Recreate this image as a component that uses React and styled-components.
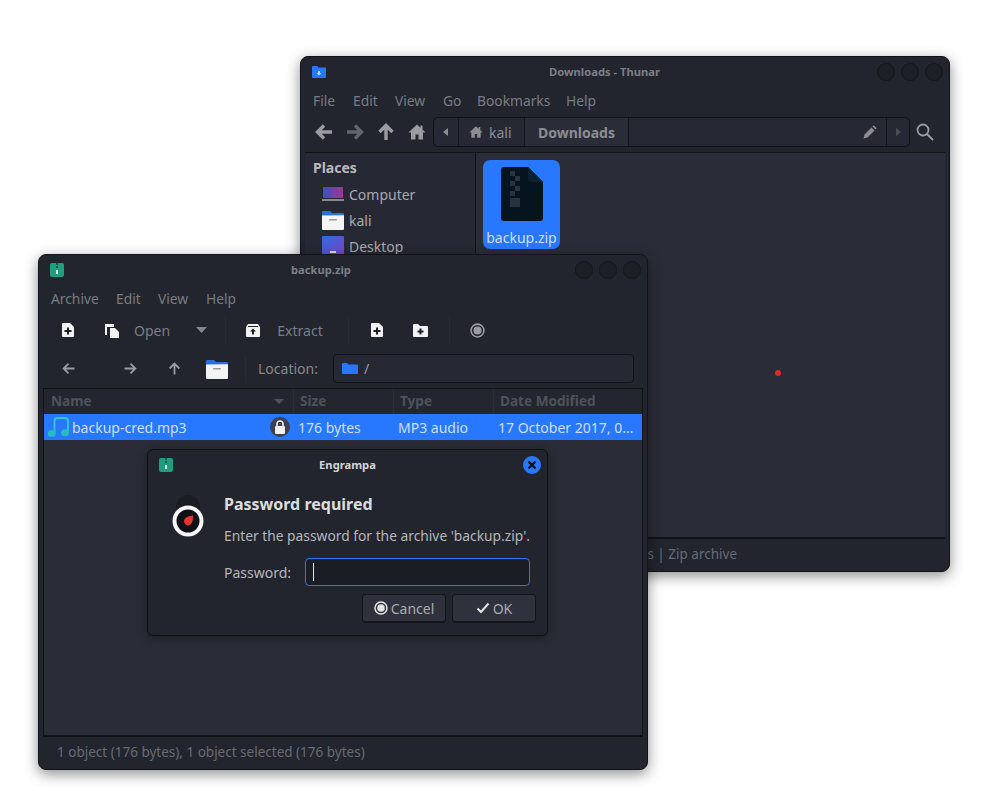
import React from "react";
import styled, { createGlobalStyle } from "styled-components";

const GlobalStyle = createGlobalStyle`
  html, body { margin: 0; padding: 0; background: #fff; }
  body { font-family: "Noto Sans", "Open Sans", sans-serif; font-size: 14px; }
  * { box-sizing: border-box; }
`;

const Desktop = styled.div`
  position: relative;
  width: 1004px;
  height: 791px;
  overflow: hidden;
  background: #fff;
`;

const Window = styled.div`
  position: absolute;
  left: ${(p) => p.$x}px;
  top: ${(p) => p.$y}px;
  width: ${(p) => p.$w}px;
  height: ${(p) => p.$h}px;
  display: flex;
  flex-direction: column;
  background: #22252e;
  border: 1px solid #121318;
  border-radius: 8px;
  box-shadow: 0 4px 14px rgba(0, 0, 0, 0.45);
  overflow: hidden;
`;

const TitleBar = styled.div`
  flex: none;
  height: ${(p) => p.$h}px;
  display: flex;
  align-items: center;
  position: relative;
  padding: 0 6px 0 11px;
`;

const TitleText = styled.div`
  position: absolute;
  left: 0;
  right: ${(p) => p.$right || 0}px;
  padding-bottom: 2px;
  text-align: center;
  font-size: 11.2px;
  font-weight: 700;
  color: ${(p) => p.$color || "#7d7f86"};
`;

const TitleButtons = styled.div`
  margin-left: auto;
  display: flex;
  gap: 6px;
`;

const Dot = styled.span`
  width: 18px;
  height: 18px;
  border-radius: 50%;
  background: #1d1f26;
  border: 1px solid #15161b;
`;

const MenuBar = styled.div`
  flex: none;
  height: ${(p) => p.$h}px;
  display: flex;
  align-items: center;
  gap: 16px;
  padding-left: 12px;
  font-size: 13.8px;
  color: #797c83;
`;

const MenuItem = styled.span`
  flex: none;
  width: ${(p) => p.$w}px;
  white-space: nowrap;
`;

/* thunar */
const NavBar = styled.div`
  flex: none;
  height: 39px;
  display: flex;
  align-items: center;
  padding: 0 15px 1px 8px;
`;

const NavIcon = styled.span`
  display: flex;
  align-items: center;
  justify-content: center;
  width: ${(p) => p.$w || 32}px;
  color: ${(p) => p.$color || "#9a9ca1"};
`;

const PathBar = styled.div`
  margin-left: 1px;
  margin-right: 6px;
  flex: 1;
  height: 30px;
  display: flex;
  background: #262933;
  border: 1px solid #121318;
  border-radius: 5px;
`;

const PathCell = styled.div`
  width: ${(p) => p.$w}px;
  flex: ${(p) => (p.$grow ? 1 : "none")};
  display: flex;
  align-items: center;
  justify-content: ${(p) => p.$justify || "flex-start"};
  gap: 6px;
  padding: 0 ${(p) => p.$pad || 0}px;
  border-left: ${(p) => (p.$divider ? "1px solid #15161b" : "none")};
  color: #8b8d93;
  font-size: 14px;
  font-weight: ${(p) => (p.$bold ? 700 : 400)};
  background: ${(p) => (p.$bold ? "#2a2d37" : "transparent")};
`;

const ThunarBody = styled.div`
  flex: 1;
  min-height: 0;
  margin: 0 4px;
  display: flex;
  border-top: 1px solid #111216;
  border-bottom: 2px solid #111216;
`;

const SidePane = styled.div`
  flex: none;
  width: 171px;
  background: #262933;
  border-right: 1px solid #111216;
  padding: 3px 0 0 8px;
  overflow: hidden;
`;

const SideTitle = styled.div`
  height: 25px;
  line-height: 24px;
  font-size: 14px;
  font-weight: 700;
  color: #b9babd;
`;

const SideRow = styled.div`
  display: flex;
  align-items: center;
  gap: 5px;
  height: 26px;
  padding-left: 9px;
  color: #a7a9ae;
  font-size: 14px;
`;

const FilePane = styled.div`
  flex: 1;
  background: #2a2c37;
  padding: 7px;
`;

const FileTile = styled.div`
  width: 77px;
  height: 89px;
  border-radius: 7px;
  background: #2777ff;
  display: flex;
  flex-direction: column;
  align-items: center;
  padding-top: 7px;
  color: #cfdffb;
  font-size: 14px;
`;

const FileLabel = styled.div`
  margin-top: 7px;
  line-height: 20px;
`;

const StatusBar = styled.div`
  flex: none;
  height: 32px;
  display: flex;
  align-items: center;
  justify-content: ${(p) => p.$justify || "flex-start"};
  padding: 0 ${(p) => p.$right || 0}px 3px ${(p) => p.$left || 0}px;
  font-size: 13.5px;
  color: #686b73;
`;

/* engrampa */
const ToolRow = styled.div`
  flex: none;
  height: ${(p) => p.$h}px;
  display: flex;
  align-items: center;
`;

const ToolItem = styled.span`
  flex: none;
  display: flex;
  align-items: center;
  justify-content: center;
  width: ${(p) => p.$w}px;
  margin-left: ${(p) => p.$ml || 0}px;
  color: ${(p) => (p.$bright ? "#9a9ca1" : "#7b7e85")};
  font-size: 14px;
`;

const ToolSep = styled.span`
  flex: none;
  width: 1px;
  height: 28px;
  margin-left: ${(p) => p.$ml || 0}px;
  background: #282b34;
`;

const LocationLabel = styled.span`
  flex: none;
  margin-left: 12px;
  width: 75px;
  color: #85878d;
  font-size: 14px;
`;

const LocationInput = styled.div`
  flex: none;
  width: 301px;
  height: 29px;
  display: flex;
  align-items: center;
  gap: 6px;
  padding-left: 8px;
  background: #262933;
  border: 1px solid #121318;
  border-radius: 4px;
  color: #9a9ca1;
  font-size: 14px;
`;

const ListFrame = styled.div`
  flex: 1;
  min-height: 0;
  margin: 0 4px;
  display: flex;
  flex-direction: column;
  background: #2a2c37;
  border: 1px solid #111216;
  border-bottom-width: 2px;
`;

const ListHeader = styled.div`
  flex: none;
  height: 25px;
  display: grid;
  grid-template-columns: 249px 100px 100px 1fr;
  background: #23262f;
`;

const HeadCell = styled.div`
  position: relative;
  display: flex;
  align-items: center;
  padding: 0 0 2px ${(p) => (p.$first ? 7 : 6)}px;
  border-left: ${(p) => (p.$first ? "none" : "1px solid #2b2e38")};
  color: #4f525b;
  font-size: 13.6px;
  font-weight: 700;
`;

const SortArrow = styled.span`
  position: absolute;
  right: 9px;
  top: 10px;
  width: 0;
  height: 0;
  border-left: 5px solid transparent;
  border-right: 5px solid transparent;
  border-top: 5px solid #4f525b;
`;

const ListRow = styled.div`
  flex: none;
  height: 26px;
  display: grid;
  grid-template-columns: 249px 100px 100px 1fr;
  align-items: center;
  background: #2777ff;
  color: #cfdffb;
  font-size: 14px;
`;

const NameCell = styled.div`
  position: relative;
  display: flex;
  align-items: center;
  gap: 3px;
  padding-left: 3px;
`;

const LockBadge = styled.span`
  position: absolute;
  right: 3px;
  top: 1px;
  width: 20px;
  height: 20px;
  border-radius: 50%;
  background: #3d4150;
  display: flex;
  align-items: center;
  justify-content: center;
`;

const TextCell = styled.div`
  padding-left: 5px;
  white-space: nowrap;
`;

/* dialog */
const Dialog = styled.div`
  position: absolute;
  left: 147px;
  top: 449px;
  width: 401px;
  height: 187px;
  display: flex;
  flex-direction: column;
  background: #22252e;
  border: 1px solid #0f1014;
  border-radius: 6px;
  box-shadow: 0 2px 10px rgba(0, 0, 0, 0.35);
`;

const DialogClose = styled.span`
  margin-left: auto;
  width: 18px;
  height: 18px;
  border-radius: 50%;
  background: #2777ff;
  display: flex;
  align-items: center;
  justify-content: center;
  z-index: 1;
`;

const DialogBody = styled.div`
  flex: 1;
  display: grid;
  grid-template-columns: 76px 1fr;
  padding-top: 13px;
`;

const DialogIcon = styled.div`
  padding: 2px 0 0 24px;
`;

const DialogHeading = styled.div`
  height: 23px;
  line-height: 23px;
  font-size: 16px;
  font-weight: 700;
  color: #dcdddf;
`;

const DialogText = styled.div`
  margin-top: 10px;
  height: 20px;
  line-height: 20px;
  font-size: 13.8px;
  color: #b5b6ba;
  white-space: nowrap;
`;

const FieldRow = styled.div`
  margin-top: 12px;
  display: flex;
  align-items: center;
  gap: 14px;
  font-size: 14px;
  color: #b5b6ba;
`;

const PasswordInput = styled.div`
  width: 225px;
  height: 28px;
  background: #1b1d24;
  border: 1px solid #2777ff;
  border-radius: 4px;
  padding: 4px 0 0 7px;
`;

const Caret = styled.div`
  width: 1px;
  height: 18px;
  background: #e6e6e6;
`;

const ButtonRow = styled.div`
  margin-top: 8px;
  margin-right: 11px;
  display: flex;
  justify-content: flex-end;
  gap: 6px;
`;

const Button = styled.div`
  width: 84px;
  height: 29px;
  display: flex;
  align-items: center;
  justify-content: center;
  gap: 3px;
  background: #2f323d;
  border: 1px solid #15161b;
  border-bottom-width: 2px;
  border-radius: 4px;
  font-size: 14px;
  color: #a9abb0;

  svg {
    color: #e4e4e4;
  }
`;

const Pointer = styled.span`
  position: absolute;
  left: 775px;
  top: 370px;
  width: 6px;
  height: 6px;
  border-radius: 50%;
  background: #e3262b;
`;

const ArrowIcon = ({ dir = "left", size = 20, weight = 3.4, color = "currentColor" }) => {
  const rot = { left: 0, right: 180, up: 90 }[dir];
  return (
    <svg width={size} height={size} viewBox="0 0 20 20" style={{ transform: `rotate(${rot}deg)` }}>
      <path d="M18 10H4M10 3.5 3.5 10 10 16.5" fill="none" stroke={color} strokeWidth={weight} />
    </svg>
  );
};

const HomeIcon = ({ size = 18, color = "currentColor" }) => (
  <svg width={size} height={size} viewBox="0 0 18 18">
    <path d="M9 1.5 0.5 9.5H3V16.5H7.5V11.5H10.5V16.5H15V9.5H17.5L14.5 6.6V2.5H12.5V4.8Z" fill={color} />
  </svg>
);

const FolderIcon = ({ w = 22, h = 20 }) => (
  <svg width={w} height={h} viewBox="0 0 22 20">
    <path d="M0 2a1 1 0 0 1 1-1h7l2 2h11a1 1 0 0 1 1 1v3H0Z" fill="#2a6fe0" />
    <path d="M0 5.5 22 5.2V19a1 1 0 0 1-1 1H1a1 1 0 0 1-1-1Z" fill="#f4f4f4" />
    <rect x="7" y="9" width="8" height="1.4" rx="0.7" fill="#9b9b9b" />
  </svg>
);

const ComputerIcon = () => (
  <svg width="22" height="20" viewBox="0 0 22 20">
    <defs>
      <linearGradient id="screen" x1="0" x2="1">
        <stop offset="0" stopColor="#3b4fc4" />
        <stop offset="1" stopColor="#a0378f" />
      </linearGradient>
    </defs>
    <rect x="1" y="3" width="20" height="11" fill="url(#screen)" />
    <rect x="0" y="15.5" width="22" height="1" fill="#e8e8e8" />
  </svg>
);

const DesktopIcon = () => (
  <svg width="22" height="20" viewBox="0 0 22 20">
    <defs>
      <linearGradient id="desk" x1="0" y1="0" x2="1" y2="1">
        <stop offset="0" stopColor="#2f6be0" />
        <stop offset="1" stopColor="#7a45c4" />
      </linearGradient>
    </defs>
    <rect width="22" height="20" rx="1" fill="url(#desk)" />
    <rect x="8" y="15" width="6" height="2" fill="#ddd" />
  </svg>
);

const ArchiveBadge = () => (
  <svg width="14" height="14" viewBox="0 0 14 14">
    <rect width="14" height="14" rx="2" fill="#1f9e7f" />
    <path d="M6 0h2v2H6ZM6 3h2v2H6Z" fill="#0d5c4b" />
    <rect x="6" y="7" width="2" height="4" fill="#d8f0e8" />
  </svg>
);

const ThunarBadge = () => (
  <svg width="14" height="12" viewBox="0 0 14 12">
    <path d="M0 1a1 1 0 0 1 1-1h4l1.5 1.5H13a1 1 0 0 1 1 1V11a1 1 0 0 1-1 1H1a1 1 0 0 1-1-1Z" fill="#2777ff" />
    <path d="M6 5h2v2h1.5L7 9.5 4.500 7H6Z" fill="#bcd4ff" />
  </svg>
);

const ZipDocIcon = () => (
  <svg width="42" height="54" viewBox="0 0 42 54">
    <path d="M3 0H27L42 15V51a3 3 0 0 1-3 3H3a3 3 0 0 1-3-3V3a3 3 0 0 1 3-3Z" fill="#06141f" />
    <path d="M27 0 42 15H30a3 3 0 0 1-3-3Z" fill="#0c2230" />
    <g fill="#27333d">
      <rect x="9" y="4" width="5" height="5" />
      <rect x="14" y="9" width="5" height="5" />
      <rect x="9" y="14" width="5" height="5" />
      <rect x="14" y="19" width="5" height="5" />
      <rect x="9" y="24" width="5" height="5" />
      <rect x="9" y="31" width="10" height="9" />
    </g>
  </svg>
);

const MusicIcon = () => (
  <svg width="22" height="22" viewBox="0 0 22 22">
    <path d="M7.500 17V5a3 3 0 0 1 3-3H18a3 3 0 0 1 3 3V16" fill="none" stroke="#2fc6cf" strokeWidth="2" />
    <ellipse cx="4.800" cy="17.500" rx="4" ry="3.500" fill="#25bcc0" />
    <ellipse cx="18" cy="16.800" rx="4" ry="3.500" fill="#25bcc0" />
  </svg>
);

const NewFileIcon = () => (
  <svg width="14" height="14" viewBox="0 0 14 14">
    <path d="M1.500 0H9L13 4V13a1 1 0 0 1-1 1H2a1 1 0 0 1-1-1V1Z" fill="#f2f2f2" />
    <path d="M6 4.500H8V7H10.500V9H8V11.500H6V9H3.500V7H6Z" fill="#1c1e25" />
  </svg>
);

const NewFolderIcon = () => (
  <svg width="15" height="13" viewBox="0 0 15 13">
    <path d="M0 1a1 1 0 0 1 1-1h4l2 2h7a1 1 0 0 1 1 1v9a1 1 0 0 1-1 1H1a1 1 0 0 1-1-1Z" fill="#f2f2f2" />
    <path d="M6.500 4.500H8.500V6.500H10.500V8.500H8.500V10.500H6.500V8.500H4.500V6.500H6.500Z" fill="#1c1e25" />
  </svg>
);

const OpenIcon = () => (
  <svg width="15" height="15" viewBox="0 0 15 15">
    <path d="M1 1H10V4H3V12H1Z" fill="#f2f2f2" />
    <path d="M6 5H11L15 9V15H6Z" fill="#f2f2f2" />
  </svg>
);

const ExtractIcon = () => (
  <svg width="14" height="13" viewBox="0 0 14 13">
    <path d="M2 0H12L14 3V12a1 1 0 0 1-1 1H1a1 1 0 0 1-1-1V3Z" fill="#f2f2f2" />
    <rect x="2" y="2" width="10" height="1" fill="#1c1e25" />
    <path d="M7 4.500 10 7.500H8V10.500H6V7.500H4Z" fill="#1c1e25" />
  </svg>
);

const StopIcon = ({ size = 14 }) => (
  <svg width={size} height={size} viewBox="0 0 14 14">
    <circle cx="7" cy="7" r="6" fill="none" stroke="currentColor" strokeWidth="1.500" />
    <circle cx="7" cy="7" r="3.800" fill="currentColor" />
  </svg>
);

const LockIcon = () => (
  <svg width="12" height="14" viewBox="0 0 12 14">
    <path d="M3 6V4a3 3 0 0 1 6 0V6" fill="none" stroke="#f2f2f2" strokeWidth="1.600" />
    <rect x="1" y="6" width="10" height="8" rx="1.200" fill="#f2f2f2" />
  </svg>
);

const PadlockIcon = () => (
  <svg width="32" height="42" viewBox="0 0 32 42">
    <path d="M4 20V12a12 12 0 0 1 24 0V20Z" fill="#1b1d24" />
    <circle cx="16" cy="26" r="13.500" fill="#101116" stroke="#f5f5f5" strokeWidth="4" />
    <path d="M21 20.500C21 25 20.500 30 16 30.500A4.500 4.500 0 0 1 12 25.500C12.500 22.500 17 21 21 20.500Z" fill="#e4352f" />
  </svg>
);

const PencilIcon = () => (
  <svg width="14" height="14" viewBox="0 0 14 14">
    <path d="M0.500 13.500 1.500 9.500 8.500 2.500 11.500 5.500 4.500 12.500ZM9.500 1.500 10.800 0.300 13.700 3.200 12.500 4.500Z" fill="#8b8d93" />
  </svg>
);

const SearchIcon = () => (
  <svg width="18" height="18" viewBox="0 0 18 18">
    <circle cx="7" cy="7" r="5.500" fill="none" stroke="#9a9ca1" strokeWidth="1.800" />
    <path d="M11 11 17 17" stroke="#9a9ca1" strokeWidth="2" />
  </svg>
);

const CloseGlyph = () => (
  <svg width="10" height="10" viewBox="0 0 10 10">
    <path d="M1.500 1.500 8.500 8.500M8.500 1.500 1.500 8.500" stroke="#10131a" strokeWidth="2.400" />
  </svg>
);

const CheckGlyph = () => (
  <svg width="14" height="12" viewBox="0 0 14 12">
    <path d="M1.500 6.500 5 10 12.500 1.500" fill="none" stroke="#e4e4e4" strokeWidth="2" />
  </svg>
);

const Triangle = ({ dir, color }) => (
  <svg width="8" height="10" viewBox="0 0 8 10">
    <path d={dir === "left" ? "M6 1V9L1 5Z" : "M2 1V9L7 5Z"} fill={color} />
  </svg>
);

const DropArrow = () => (
  <svg width="11" height="6" viewBox="0 0 11 6">
    <path d="M0 0H11L5.500 6Z" fill="#85878d" />
  </svg>
);

const thunarMenu = [
  ["File", 24],
  ["Edit", 26],
  ["View", 32],
  ["Go", 18],
  ["Bookmarks", 73],
  ["Help", 31],
];

const archiveMenu = [
  ["Archive", 49],
  ["Edit", 26],
  ["View", 32],
  ["Help", 31],
];

function Menu({ items, height }) {
  return (
    <MenuBar $h={height}>
      {items.map(([label, width]) => (
        <MenuItem key={label} $w={width}>
          {label}
        </MenuItem>
      ))}
    </MenuBar>
  );
}

function ThunarWindow() {
  return (
    <Window $x={300} $y={56} $w={650} $h={516}>
      <TitleBar $h={30}>
        <ThunarBadge />
        <TitleText $right={41}>Downloads - Thunar</TitleText>
        <TitleButtons>
          <Dot />
          <Dot />
          <Dot />
        </TitleButtons>
      </TitleBar>
      <Menu items={thunarMenu} height={26} />
      <NavBar>
        <NavIcon $w={30}>
          <ArrowIcon dir="left" />
        </NavIcon>
        <NavIcon $w={31} $color="#62656c">
          <ArrowIcon dir="right" />
        </NavIcon>
        <NavIcon $w={31}>
          <ArrowIcon dir="up" />
        </NavIcon>
        <NavIcon $w={31}>
          <HomeIcon />
        </NavIcon>
        <PathBar>
          <PathCell $w={24} $justify="center">
            <Triangle dir="left" color="#8b8d93" />
          </PathCell>
          <PathCell $w={66} $pad={10} $divider>
            <HomeIcon size={14} />
            kali
          </PathCell>
          <PathCell $w={104} $pad={13} $divider $bold>
            Downloads
          </PathCell>
          <PathCell $grow $justify="flex-end" $pad={9} $divider>
            <PencilIcon />
          </PathCell>
          <PathCell $w={23} $justify="center" $divider>
            <Triangle dir="right" color="#4c4f58" />
          </PathCell>
        </PathBar>
        <SearchIcon />
      </NavBar>
      <ThunarBody>
        <SidePane>
          <SideTitle>Places</SideTitle>
          <SideRow>
            <ComputerIcon />
            Computer
          </SideRow>
          <SideRow>
            <FolderIcon />
            kali
          </SideRow>
          <SideRow>
            <DesktopIcon />
            Desktop
          </SideRow>
        </SidePane>
        <FilePane>
          <FileTile>
            <ZipDocIcon />
            <FileLabel>backup.zip</FileLabel>
          </FileTile>
        </FilePane>
      </ThunarBody>
      <StatusBar $justify="flex-end" $right={212}>
        "backup.zip": 176 bytes | Zip archive
      </StatusBar>
    </Window>
  );
}

function ArchiveWindow() {
  return (
    <Window $x={38} $y={254} $w={610} $h={516}>
      <TitleBar $h={30}>
        <ArchiveBadge />
        <TitleText $right={44}>backup.zip</TitleText>
        <TitleButtons>
          <Dot />
          <Dot />
          <Dot />
        </TitleButtons>
      </TitleBar>
      <Menu items={archiveMenu} height={26} />
      <ToolRow $h={38}>
        <ToolItem $w={20} $ml={19}>
          <NewFileIcon />
        </ToolItem>
        <ToolItem $w={20} $ml={23}>
          <OpenIcon />
        </ToolItem>
        <ToolItem $w={36} $ml={13}>
          Open
        </ToolItem>
        <ToolItem $w={20} $ml={21}>
          <DropArrow />
        </ToolItem>
        <ToolSep $ml={14} />
        <ToolItem $w={20} $ml={17}>
          <ExtractIcon />
        </ToolItem>
        <ToolItem $w={48} $ml={13}>
          Extract
        </ToolItem>
        <ToolSep $ml={24} />
        <ToolItem $w={20} $ml={18}>
          <NewFileIcon />
        </ToolItem>
        <ToolItem $w={20} $ml={23}>
          <NewFolderIcon />
        </ToolItem>
        <ToolSep $ml={19} />
        <ToolItem $w={20} $ml={17} $bright>
          <StopIcon size={15} />
        </ToolItem>
      </ToolRow>
      <ToolRow $h={39}>
        <ToolItem $w={20} $ml={19} $bright>
          <ArrowIcon dir="left" size={15} weight={2.4} />
        </ToolItem>
        <ToolItem $w={20} $ml={42} $bright>
          <ArrowIcon dir="right" size={15} weight={2.4} />
        </ToolItem>
        <ToolItem $w={20} $ml={24} $bright>
          <ArrowIcon dir="up" size={15} weight={2.4} />
        </ToolItem>
        <ToolItem $w={24} $ml={21}>
          <FolderIcon />
        </ToolItem>
        <ToolSep $ml={16} />
        <LocationLabel>Location:</LocationLabel>
        <LocationInput>
          <svg width="16" height="11" viewBox="0 0 16 11">
            <path d="M0 1a1 1 0 0 1 1-1h4l1.500 1.500H15a1 1 0 0 1 1 1V10a1 1 0 0 1-1 1H1a1 1 0 0 1-1-1Z" fill="#2777ff" />
          </svg>
          /
        </LocationInput>
      </ToolRow>
      <ListFrame>
        <ListHeader>
          <HeadCell $first>
            Name
            <SortArrow />
          </HeadCell>
          <HeadCell>Size</HeadCell>
          <HeadCell>Type</HeadCell>
          <HeadCell>Date Modified</HeadCell>
        </ListHeader>
        <ListRow>
          <NameCell>
            <MusicIcon />
            backup-cred.mp3
            <LockBadge>
              <LockIcon />
            </LockBadge>
          </NameCell>
          <TextCell>176 bytes</TextCell>
          <TextCell>MP3 audio</TextCell>
          <TextCell>17 October 2017, 0…</TextCell>
        </ListRow>
      </ListFrame>
      <StatusBar $left={18}>1 object (176 bytes), 1 object selected (176 bytes)</StatusBar>
    </Window>
  );
}

function PasswordDialog() {
  return (
    <Dialog>
      <TitleBar $h={30}>
        <ArchiveBadge />
        <TitleText $color="#d4d5d7">Engrampa</TitleText>
        <DialogClose>
          <CloseGlyph />
        </DialogClose>
      </TitleBar>
      <DialogBody>
        <DialogIcon>
          <PadlockIcon />
        </DialogIcon>
        <div>
          <DialogHeading>Password required</DialogHeading>
          <DialogText>Enter the password for the archive 'backup.zip'.</DialogText>
          <FieldRow>
            Password:
            <PasswordInput>
              <Caret />
            </PasswordInput>
          </FieldRow>
          <ButtonRow>
            <Button>
              <StopIcon />
              Cancel
            </Button>
            <Button>
              <CheckGlyph />
              OK
            </Button>
          </ButtonRow>
        </div>
      </DialogBody>
    </Dialog>
  );
}

export default function App() {
  return (
    <Desktop>
      <GlobalStyle />
      <ThunarWindow />
      <Pointer />
      <ArchiveWindow />
      <PasswordDialog />
    </Desktop>
  );
}
